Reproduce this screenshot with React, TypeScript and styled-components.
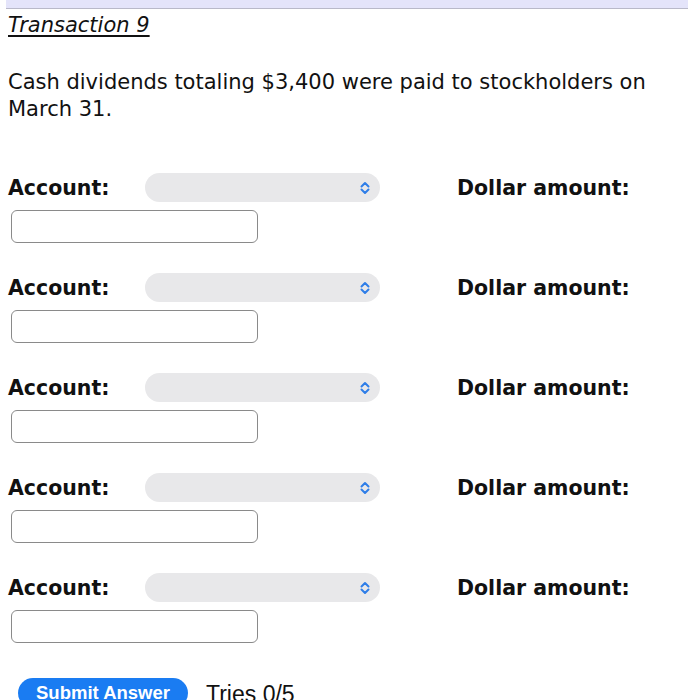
import styled, { createGlobalStyle } from "styled-components";

const GlobalStyle = createGlobalStyle`
  body {
    margin: 0;
    background: #fff;
    font-family: "DejaVu Sans", Verdana, sans-serif;
    color: #111;
  }
`;

const Page = styled.div`
  padding: 0 8px;
  height: 700px;
  overflow: hidden;
`;

const TopBar = styled.div`
  height: 8px;
  margin-left: -2px;
  margin-right: -8px;
  background: #e4e4fa;
  border-bottom: 1px solid #b9b9c9;
`;

const Title = styled.h2`
  margin: 4px 0 0;
  font-size: 21px;
  font-weight: 400;
  font-style: italic;
  text-decoration: underline;
  text-underline-offset: 3px;
  line-height: 25px;
`;

const Prompt = styled.p`
  margin: 31px 0 0;
  font-size: 21px;
  line-height: 27px;
`;

const Rows = styled.div`
  margin-top: 50px;
  display: flex;
  flex-direction: column;
  gap: 30px;
`;

const Row = styled.div`
  display: grid;
  grid-template-columns: 137px 235px auto;
  grid-template-rows: 29px 33px;
  row-gap: 8px;
  align-items: center;
`;

const Label = styled.span<{ $indent?: number }>`
  font-weight: 700;
  font-size: 20.5px;
  margin-left: ${({ $indent }) => $indent ?? 0}px;
`;

const SelectPill = styled.div`
  height: 29px;
  border-radius: 15px;
  background: #e8e8ea;
  display: flex;
  align-items: center;
  justify-content: flex-end;
  padding-right: 10px;
  box-sizing: border-box;
`;

const AmountInput = styled.input`
  grid-column: 1 / span 3;
  width: 247px;
  height: 33px;
  margin: 0 0 0 3px;
  box-sizing: border-box;
  border: 1.5px solid #8a8a8a;
  border-radius: 6px;
  background: #fff;
  outline: none;
`;

const Footer = styled.div`
  margin-top: 35px;
  margin-left: 10px;
  display: flex;
  align-items: flex-start;
  gap: 18px;
`;

const SubmitButton = styled.button`
  width: 170px;
  height: 30px;
  border: none;
  border-radius: 15px;
  background: #1a7cf2;
  color: #fff;
  font-family: "Liberation Sans", Arial, sans-serif;
  font-weight: 700;
  font-size: 18.5px;
  line-height: 30px;
  padding: 0;
`;

const Tries = styled.span`
  font-family: "Liberation Sans", Arial, sans-serif;
  font-size: 23px;
  line-height: 30px;
  margin-top: 1px;
  color: #111;
`;

const Chevrons = () => (
  <svg width="10" height="14" viewBox="0 0 10 14" fill="none">
    <path d="M1.5 5.5 L5 2 L8.5 5.5" stroke="#2f7ee8" strokeWidth="2" strokeLinecap="round" strokeLinejoin="round" />
    <path d="M1.5 8.5 L5 12 L8.5 8.5" stroke="#2f7ee8" strokeWidth="2" strokeLinecap="round" strokeLinejoin="round" />
  </svg>
);

const rows = [1, 2, 3, 4, 5];

export default function App() {
  return (
    <Page>
      <GlobalStyle />
      <TopBar />
      <Title>Transaction 9</Title>
      <Prompt>
        Cash dividends totaling $3,400 were paid to stockholders on March 31.
      </Prompt>
      <Rows>
        {rows.map((r) => (
          <Row key={r}>
            <Label>Account:</Label>
            <SelectPill>
              <Chevrons />
            </SelectPill>
            <Label $indent={77}>Dollar amount:</Label>
            <AmountInput type="text" />
          </Row>
        ))}
      </Rows>
      <Footer>
        <SubmitButton>Submit Answer</SubmitButton>
        <Tries>Tries 0/5</Tries>
      </Footer>
    </Page>
  );
}
